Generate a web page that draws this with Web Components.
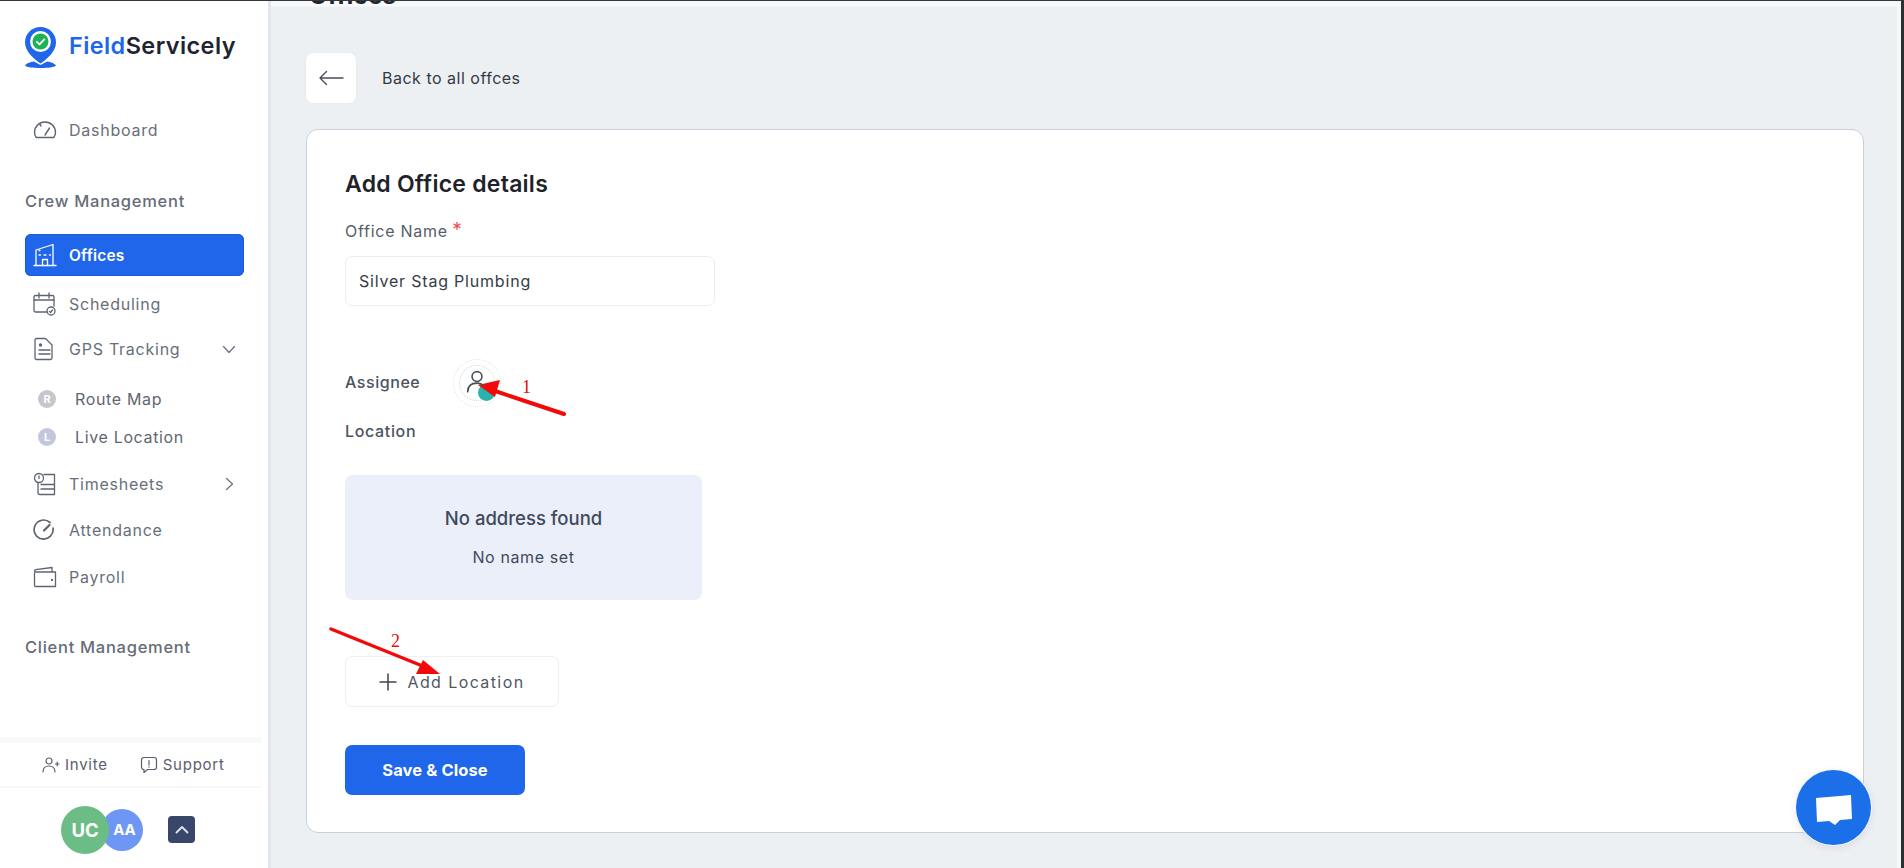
<!DOCTYPE html>
<html lang="en">
<head>
<meta charset="utf-8">
<title>FieldServicely</title>
<style>
html,body{margin:0;padding:0;height:100%;overflow:hidden;font-family:Inter,"Liberation Sans",sans-serif;background:#ecf0f3}
</style>
</head>
<body>
<app-shell>
  <side-bar slot="side"></side-bar>
  <office-page slot="main"></office-page>
</app-shell>
<script>
const ICONS={
 dash:'<svg width="24" height="18" viewBox="0 0 24 18" fill="none" stroke="currentColor" stroke-width="1.4" stroke-linecap="round" stroke-linejoin="round"><path d="M3.200 16.500C2 14.800 1.500 13 1.500 11.500a10.500 10.500 0 0 1 21 0c0 1.700-.5 3.300-1.700 5z"/><path d="M12 14l4.500-7"/><path d="M7 3.500l1 1.500"/></svg>',
 office:'<svg width="24" height="24" viewBox="0 0 24 24" fill="none" stroke="currentColor" stroke-width="1.300" stroke-linecap="round" stroke-linejoin="round"><path d="M1 22.500h22"/><path d="M3 22.500V7l17-5.500v21"/><path d="M9.500 22.500v-6h5v6"/><path d="M6 12h1.500M11 12h2M16.500 12h1M6 7.500h1"/></svg>',
 cal:'<svg width="24" height="24" viewBox="0 0 24 24" fill="none" stroke="currentColor" stroke-width="1.300" stroke-linecap="round" stroke-linejoin="round"><path d="M14 20H2.500a1.500 1.500 0 0 1-1.500-1.500V5a1.500 1.500 0 0 1 1.500-1.500h17A1.500 1.500 0 0 1 21 5v9"/><path d="M1 8h20M6 1v5M16 1v5"/><circle cx="18" cy="19" r="4"/><path d="M16.500 19.500l1 1 2-2.500"/></svg>',
 doc:'<svg width="22" height="24" viewBox="0 0 22 24" fill="none" stroke="currentColor" stroke-width="1.300" stroke-linecap="round" stroke-linejoin="round"><path d="M3.500 1.500h9l6.500 6.500v13a1.500 1.500 0 0 1-1.500 1.500h-14A1.500 1.500 0 0 1 2 21V3a1.500 1.500 0 0 1 1.500-1.500z"/><path d="M6 13h11M6 17h11"/><circle cx="7.500" cy="8" r="1" fill="currentColor"/></svg>',
 sheet:'<svg width="24" height="24" viewBox="0 0 24 24" fill="none" stroke="currentColor" stroke-width="1.300" stroke-linecap="round" stroke-linejoin="round"><circle cx="6" cy="6" r="4.500"/><path d="M6 4v2.500"/><path d="M11 2.500h10.500V22.500H7a2 2 0 0 1-2-2V11"/><path d="M8 12.500h13M8 17h13"/></svg>',
 att:'<svg width="22" height="22" viewBox="0 0 22 22" fill="none" stroke="currentColor" stroke-linecap="round"><path stroke-width="1.700" d="M17 3.500A9.500 9.500 0 1 0 20 9"/><path stroke-width="2.200" d="M11 11.500L16.500 6"/></svg>',
 wallet:'<svg width="24" height="22" viewBox="0 0 24 22" fill="none" stroke="currentColor" stroke-width="1.300" stroke-linecap="round" stroke-linejoin="round"><path d="M1.500 7v12.500a1 1 0 0 0 1 1h20V6H2.500a1 1 0 0 1-1-1 1.500 1.500 0 0 1 1.200-1.300L19 1.500V6"/><circle cx="19" cy="14" r=".5" fill="currentColor"/></svg>',
 down:'<svg width="14" height="9" viewBox="0 0 14 9" fill="none" stroke="currentColor" stroke-width="1.300" stroke-linecap="round" stroke-linejoin="round"><path d="M1.500 1.500L7 7.500l5.500-6"/></svg>',
 right:'<svg width="9" height="14" viewBox="0 0 9 14" fill="none" stroke="currentColor" stroke-width="1.300" stroke-linecap="round" stroke-linejoin="round"><path d="M1.500 1.500l6 5.500-6 5.500"/></svg>'
};

class AppShell extends HTMLElement{
 constructor(){super();this.attachShadow({mode:'open'}).innerHTML=`<style>
 :host{display:flex;height:867px;border-top:1px solid #33373b;background:#ecf0f3;overflow:hidden}
 .strip{flex:0 0 4px;background:#f5f7f9}
 .edge{flex:0 0 3px;background:#2d3033}
 ::slotted([slot=main]){flex:1;min-width:0}
 </style><slot name="side"></slot><slot name="main"></slot><div class="strip"></div><div class="edge"></div>`;}
}
customElements.define('app-shell',AppShell);

class BrandLogo extends HTMLElement{
 constructor(){super();this.attachShadow({mode:'open'}).innerHTML=`<style>
 :host{display:flex;align-items:center;gap:13px;height:42px;font-size:23.500px;font-weight:600;letter-spacing:.4px;color:#1e2430}
 b{font-weight:600;color:#1f66ea}
 span{display:block;padding-bottom:4px}
 svg{flex:none}
 </style><svg width="31" height="41" viewBox="0 0 31 41">
 <path d="M15.500 0C6.800 0 0 6.800 0 15.200c0 9 8 15.800 15.500 21.300C23 31 31 24.200 31 15.200 31 6.800 24.200 0 15.500 0z" fill="#1f66ea"/>
 <path d="M0 38.500c1-1.800 5-3.400 9-4l6.500 3.500 6.500-3.500c4 .6 8 2.200 9 4-1.500 1.800-8 2.500-15.500 2.500S1.500 40.300 0 38.500z" fill="#1f66ea"/>
 <circle cx="15.500" cy="14.500" r="10.500" fill="#fff"/>
 <circle cx="15.500" cy="14.500" r="8" fill="#1eb256"/>
 <path d="M11.800 14.800l2.700 2.600 4.800-5" fill="none" stroke="#fff" stroke-width="1.800" stroke-linecap="round" stroke-linejoin="round"/>
 </svg><span><b>Field</b>Servicely</span>`;}
}
customElements.define('brand-logo',BrandLogo);

class NavItem extends HTMLElement{
 connectedCallback(){
  const icon=ICONS[this.getAttribute('icon')]||'';
  const arrow=ICONS[this.getAttribute('arrow')]||'';
  this.attachShadow({mode:'open'}).innerHTML=`<style>
  :host{display:flex;align-items:center;height:42px;box-sizing:border-box;padding:0 0 0 8px;border-radius:6px;font-size:16px;font-weight:400;letter-spacing:.75px;color:#686f7a}
  :host([active]){background:#1f66ea;color:#fff;font-size:15.500px;font-weight:600;letter-spacing:.2px;box-shadow:inset 0 0 0 1px #1a5cd8}
  .ic{flex:0 0 36px;display:flex;align-items:center;justify-content:flex-start;color:#5d6470}
  :host([active]) .ic{color:#fff}
  .t{flex:1}
  .a{flex:0 0 24px;display:flex;justify-content:center;margin-right:3px;color:#6e7580}
  </style><span class="ic">${icon}</span><span class="t"><slot></slot></span>${arrow?`<span class="a">${arrow}</span>`:''}`;
 }
}
customElements.define('nav-item',NavItem);

class SubItem extends HTMLElement{
 connectedCallback(){
  const l=this.getAttribute('letter')||'';
  this.attachShadow({mode:'open'}).innerHTML=`<style>
  :host{display:flex;align-items:center;height:38px;padding-left:13px;font-size:16px;font-weight:400;letter-spacing:.65px;color:#5f6672}
  i{flex:none;width:18px;height:18px;border-radius:50%;background:var(--dot,#c5c7cc);color:#fff;font:700 11px/18px Inter,sans-serif;font-style:normal;text-align:center;margin-right:19px;letter-spacing:0}
  </style><i>${l}</i><slot></slot>`;
 }
}
customElements.define('sub-item',SubItem);

class NavHeading extends HTMLElement{
 constructor(){super();this.attachShadow({mode:'open'}).innerHTML=`<style>
 :host{display:block;height:24px;line-height:24px;font-size:16.500px;font-weight:500;letter-spacing:.72px;color:#656c77;position:relative}
 </style><slot></slot>`;}
}
customElements.define('nav-heading',NavHeading);

class SideFooter extends HTMLElement{
 constructor(){super();this.attachShadow({mode:'open'}).innerHTML=`<style>
 :host{display:block;font-size:15px;font-weight:400;letter-spacing:.75px;color:#59606c}
 .links{box-sizing:border-box;height:51px;display:flex;align-items:center;gap:32px;padding-left:42px;border-top:6px solid #f8f9fa;border-bottom:2px solid #f7f8f9;margin-right:6px}
 .links span{display:flex;align-items:center;gap:5px}
 .who{box-sizing:border-box;height:80px;display:flex;align-items:center;padding:3px 0 0 61px}
 .av{border-radius:50%;color:#fff;display:flex;align-items:center;justify-content:center;font-weight:700;letter-spacing:0}
 .uc{width:48px;height:48px;background:#6cbd85;font-size:18.500px;position:relative;z-index:1}
 .aa{width:42px;height:42px;background:#6e96f5;font-size:15px;margin-left:-8px;padding-left:5px;box-sizing:border-box}
 .up{width:27px;height:27px;border-radius:4px;background:#38466a;margin-left:25px;display:flex;align-items:center;justify-content:center}
 </style>
 <div class="links"><span><svg width="18" height="16" viewBox="0 0 18 16" fill="none" stroke="currentColor" stroke-width="1.200" stroke-linecap="round"><circle cx="7" cy="4" r="3"/><path d="M1 15c0-4 2.500-6 6-6s6 2 6 6"/><path d="M13.500 7h3.500M15.200 5.200v3.500"/></svg>Invite</span>
 <span><svg width="18" height="18" viewBox="0 0 18 18" fill="none" stroke="currentColor" stroke-width="1.200" stroke-linecap="round" stroke-linejoin="round"><path d="M4 1.500h10A2.500 2.500 0 0 1 16.500 4v7a2.500 2.500 0 0 1-2.500 2.500H7.500L4 16.500v-3A2.500 2.500 0 0 1 1.500 11V4A2.500 2.500 0 0 1 4 1.500z"/><path d="M9 4.500v4.500M9 10.800v.4"/></svg>Support</span></div>
 <div class="who"><span class="av uc">UC</span><span class="av aa">AA</span><span class="up"><svg width="14" height="9" viewBox="0 0 14 9" fill="none" stroke="#dfe4ee" stroke-width="1.800" stroke-linecap="round" stroke-linejoin="round"><path d="M1.500 7.500L7 2l5.500 5.500"/></svg></span></div>`;}
}
customElements.define('side-footer',SideFooter);

class SideBar extends HTMLElement{
 constructor(){super();this.attachShadow({mode:'open'}).innerHTML=`<style>
 :host{flex:0 0 271px;box-sizing:border-box;width:271px;height:867px;background:#fff;border-right:3px solid #e3e7ec;display:flex;flex-direction:column}
 .nav{padding:0 24px 0 25px;display:flex;flex-direction:column}
 brand-logo{margin-top:25px}
 side-footer{margin-top:auto}
 </style>
 <div class="nav">
  <brand-logo></brand-logo>
  <nav-item icon="dash" style="margin-top:41px">Dashboard</nav-item>
  <nav-heading style="margin-top:38px">Crew Management</nav-heading>
  <nav-item icon="office" active style="margin-top:21px">Offices</nav-item>
  <nav-item icon="cal" style="margin-top:7px">Scheduling</nav-item>
  <nav-item icon="doc" arrow="down" style="margin-top:3px">GPS Tracking</nav-item>
  <sub-item letter="R" style="margin-top:10px">Route Map</sub-item>
  <sub-item letter="L" style="--dot:#c4c6dc">Live Location</sub-item>
  <nav-item icon="sheet" arrow="right" style="margin-top:7px">Timesheets</nav-item>
  <nav-item icon="att" style="margin-top:4px">Attendance</nav-item>
  <nav-item icon="wallet" style="margin-top:5px">Payroll</nav-item>
  <nav-heading style="margin-top:37px">Client Management</nav-heading>
 </div>
 <side-footer></side-footer>`;}
}
customElements.define('side-bar',SideBar);

class BackLink extends HTMLElement{
 constructor(){super();this.attachShadow({mode:'open'}).innerHTML=`<style>
 :host{display:flex;align-items:center;gap:26px;font-size:16px;font-weight:400;letter-spacing:.5px;color:#333a44}
 .b{width:50px;height:50px;border-radius:7px;background:#fff;display:flex;align-items:center;justify-content:center;box-shadow:0 0 2px #dde2e8}
 </style><span class="b"><svg width="26" height="16" viewBox="0 0 26 16" fill="none" stroke="#4a4f57" stroke-width="1.400" stroke-linecap="round" stroke-linejoin="round"><path d="M25 8H2M8.500 1.500L2 8l6.500 6.500"/></svg></span><slot></slot>`;}
}
customElements.define('back-link',BackLink);

class TextField extends HTMLElement{
 connectedCallback(){
  this.attachShadow({mode:'open'}).innerHTML=`<style>
  :host{display:block}
  label{display:block;height:20px;line-height:20px;font-size:16px;font-weight:400;letter-spacing:.75px;color:#565d68;position:relative}
  label i{color:#f04a55;font-style:normal;font-size:19px;line-height:0;position:relative;top:-1px;left:-1px}
  .in{margin-top:15px;box-sizing:border-box;width:370px;height:50px;border:1px solid #eceef1;border-radius:7px;padding:0 13px;display:flex;align-items:center;font-size:16px;font-weight:400;letter-spacing:.8px;color:#363c46;background:#fff}
  </style><label>${this.getAttribute('label')} <i>*</i></label><div class="in">${this.getAttribute('value')}</div>`;
 }
}
customElements.define('text-field',TextField);

class AssigneeRow extends HTMLElement{
 constructor(){super();this.attachShadow({mode:'open'}).innerHTML=`<style>
 :host{display:flex;align-items:center;height:48px;font-size:16px;font-weight:500;letter-spacing:.55px;color:#4c5362}
 .l{width:108px;padding-bottom:3px}
 .c{position:relative;width:48px;height:48px;border-radius:50%;border:1px dotted #dfe3e7;box-sizing:border-box;display:flex;align-items:center;justify-content:center}
 .c::before{content:"";position:absolute;inset:5px;border-radius:50%;border:1px dotted #cfd4da}
 .dot{position:absolute;right:5px;bottom:5px;width:17px;height:17px;border-radius:50%;background:#28b3ac}
 svg{position:relative;z-index:1;margin:-3px 0 0 -1px}
 </style><span class="l"><slot></slot></span><span class="c"><span class="dot"></span><svg width="22" height="24" viewBox="0 0 20 22" fill="none" stroke="#4c5158" stroke-width="1.500" stroke-linecap="round"><circle cx="10" cy="6" r="4.500"/><path d="M1.500 20c0-5 3-8 8.500-8 2.500 0 4 .6 5.500 1.600"/></svg></span>`;}
}
customElements.define('assignee-row',AssigneeRow);

class AddressEmpty extends HTMLElement{
 constructor(){super();this.attachShadow({mode:'open'}).innerHTML=`<style>
 :host{display:flex;flex-direction:column;align-items:center;box-sizing:border-box;width:357px;height:125px;border-radius:8px;background:#ebeffa;color:#414a5c;padding-top:31px}
 .a{height:24px;line-height:24px;font-size:18.500px;font-weight:500}
 .b{margin-top:17px;height:20px;line-height:20px;font-size:16px;font-weight:400;letter-spacing:.6px}
 </style><div class="a">No address found</div><div class="b">No name set</div>`;}
}
customElements.define('address-empty',AddressEmpty);

class AddButton extends HTMLElement{
 constructor(){super();this.attachShadow({mode:'open'}).innerHTML=`<style>
 :host{display:flex;align-items:center;justify-content:center;gap:10px;box-sizing:border-box;width:214px;height:51px;border:1px solid #eef0f2;border-radius:7px;font-size:16px;font-weight:400;letter-spacing:1.400px;color:#515762;background:#fff}
 </style><svg width="18" height="18" viewBox="0 0 18 18" stroke="#3f444c" stroke-width="1.500" stroke-linecap="round"><path d="M9 1v16M1 9h16"/></svg><slot></slot>`;}
}
customElements.define('add-button',AddButton);

class PrimaryButton extends HTMLElement{
 constructor(){super();this.attachShadow({mode:'open'}).innerHTML=`<style>
 :host{display:flex;align-items:center;justify-content:center;width:180px;height:50px;border-radius:7px;background:#1f66ea;color:#fff;font-size:16.500px;font-weight:700;letter-spacing:.1px}
 </style><slot></slot>`;}
}
customElements.define('primary-button',PrimaryButton);

class ChatBubble extends HTMLElement{
 constructor(){super();this.attachShadow({mode:'open'}).innerHTML=`<style>
 :host{position:absolute;left:1796px;top:770px;width:75px;height:75px;border-radius:50%;background:#1b6fe8;display:flex;align-items:center;justify-content:center;box-shadow:0 0 0 1px #f3f5f8,0 2px 8px rgba(30,50,90,.12)}
 </style><svg width="38" height="31" viewBox="0 0 38 31" style="margin-top:3px"><path d="M1 4l35-3 1 24-12 1-5 5-6-4-12 1z" fill="#fff"/></svg>`;}
}
customElements.define('chat-bubble',ChatBubble);

class MarkupLayer extends HTMLElement{
 constructor(){super();this.attachShadow({mode:'open'}).innerHTML=`<style>
 :host{position:absolute;left:0;top:0;width:1904px;height:868px;pointer-events:none}
 svg{display:block}
 text{font-family:"Liberation Serif",serif;font-size:18px;fill:#e01010}
 </style><svg width="1904" height="868" viewBox="0 0 1904 868">
 <path d="M564 414L492 390" stroke="#f20a0a" stroke-width="4" stroke-linecap="round"/>
 <path d="M478 385l22-5-5 17z" fill="#f20a0a"/>
 <path d="M331 629L425 667" stroke="#f20a0a" stroke-width="3.500" stroke-linecap="round"/>
 <path d="M440 674l-24 0 7-14z" fill="#f20a0a"/>
 <text x="522" y="393">1</text><text x="391" y="647">2</text>
 </svg>`;}
}
customElements.define('markup-layer',MarkupLayer);

class OfficePage extends HTMLElement{
 constructor(){super();this.attachShadow({mode:'open'}).innerHTML=`<style>
 :host{display:block;box-sizing:border-box;height:867px;padding:0 33px 0 35px;overflow:hidden;background:linear-gradient(#f7f9fa 0,#f7f9fa 5px,#ecf0f3 6px)}
 h1{margin:-17px 0 0 3px;height:24px;line-height:24px;font-size:24px;font-weight:700;letter-spacing:.3px;color:#20242b}
 back-link{margin-top:45px}
 .card{margin-top:26px;box-sizing:border-box;height:704px;background:#fff;border:1px solid #c8d0da;border-radius:12px;padding:40px 38px}
 h2{margin:0;height:28px;line-height:28px;font-size:23px;font-weight:600;letter-spacing:.25px;color:#1f2329}
 text-field{margin-top:23px}
 assignee-row{margin-top:53px}
 .loc{margin-top:14px;height:20px;line-height:20px;font-size:16px;font-weight:500;letter-spacing:.65px;color:#4c5362}
 address-empty{margin-top:34px}
 add-button{margin-top:56px}
 primary-button{margin-top:38px}
 </style>
 <h1>Offices</h1>
 <back-link>Back to all offces</back-link>
 <section class="card">
  <h2>Add Office details</h2>
  <text-field label="Office Name" value="Silver Stag Plumbing"></text-field>
  <assignee-row>Assignee</assignee-row>
  <div class="loc">Location</div>
  <address-empty></address-empty>
  <add-button>Add Location</add-button>
  <primary-button>Save &amp; Close</primary-button>
 </section>
 <chat-bubble></chat-bubble>
 <markup-layer></markup-layer>`;}
}
customElements.define('office-page',OfficePage);
</script>
</body>
</html>
